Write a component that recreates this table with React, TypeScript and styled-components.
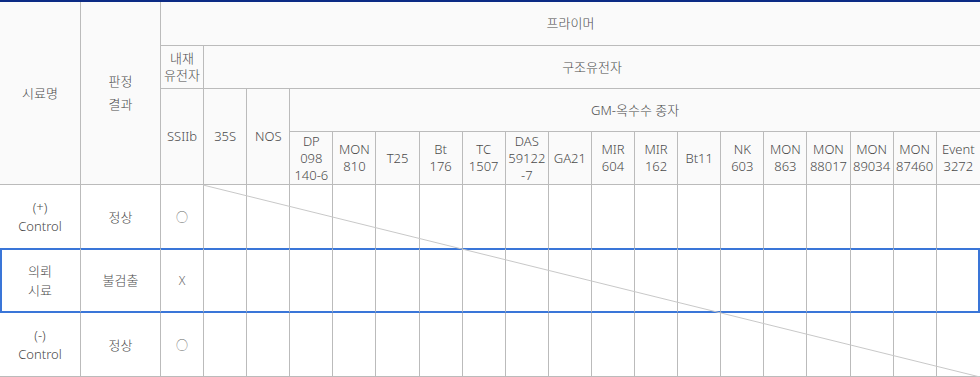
import styled, { createGlobalStyle } from "styled-components";

const GlobalStyle = createGlobalStyle`
  html, body {
    margin: 0;
    padding: 0;
    background: #fff;
  }
  body {
    font-family: "Noto Sans", "Noto Sans CJK KR", sans-serif;
  }
`;

const Wrap = styled.div`
  position: relative;
  width: 980px;
`;

const Table = styled.table`
  width: 980px;
  table-layout: fixed;
  border-collapse: separate;
  border-spacing: 0;
  border-top: 2px solid #0b2a84;
  color: #4a4a4a;
  font-size: 13px;
  font-weight: 300;
`;

const HeadRow = styled.tr<{ $h: number }>`
  height: ${({ $h }) => $h}px;
`;

const Th = styled.th<{ $last?: boolean; $lh?: number }>`
  box-sizing: border-box;
  padding: 0 1px;
  background: #fafafa;
  font-weight: 300;
  line-height: ${({ $lh }) => $lh ?? 17}px;
  text-align: center;
  vertical-align: middle;
  border-bottom: 1px solid #bbb;
  border-right: ${({ $last }) => ($last ? "none" : "1px solid #bbb")};
  white-space: nowrap;
`;

const BodyRow = styled.tr<{ $hl?: boolean; $beforeHl?: boolean }>`
  height: 64px;

  & > td {
    border-bottom: ${({ $hl, $beforeHl }) =>
      $hl ? "2px solid #3a76d8" : $beforeHl ? "1px solid #3a76d8" : "1px solid #bbb"};
    box-shadow: ${({ $hl }) => ($hl ? "inset 0 1px 0 #3a76d8" : "none")};
  }
  & > td:first-child {
    box-shadow: ${({ $hl }) =>
      $hl ? "inset 0 1px 0 #3a76d8, inset 2px 0 0 #3a76d8" : "none"};
  }
  & > td:last-child {
    border-right: none;
    box-shadow: ${({ $hl }) =>
      $hl ? "inset 0 1px 0 #3a76d8, inset -2px 0 0 #3a76d8" : "none"};
  }
`;

const Td = styled.td`
  box-sizing: border-box;
  padding: 1px 1px 0;
  background: #fff;
  line-height: 19px;
  text-align: center;
  vertical-align: middle;
  border-right: 1px solid #bbb;
`;

const Mark = styled.span`
  font-size: 12px;
  color: #666;
`;

const Diagonal = styled.svg`
  position: absolute;
  left: 203px;
  top: 185px;
  width: calc(100% - 203px);
  height: 192px;
  pointer-events: none;
`;

const gmColumns: string[][] = [
  ["DP", "098", "140-6"],
  ["MON", "810"],
  ["T25"],
  ["Bt", "176"],
  ["TC", "1507"],
  ["DAS", "59122", "-7"],
  ["GA21"],
  ["MIR", "604"],
  ["MIR", "162"],
  ["Bt11"],
  ["NK", "603"],
  ["MON", "863"],
  ["MON", "88017"],
  ["MON", "89034"],
  ["MON", "87460"],
  ["Event", "3272"],
];

const samples = [
  { name: ["(+)", "Control"], result: "정상", mark: "○", beforeHl: true },
  { name: ["의뢰", "시료"], result: "불검출", mark: "X", hl: true },
  { name: ["(-)", "Control"], result: "정상", mark: "○" },
];

const lines = (parts: string[]) =>
  parts.map((p, i) => (
    <span key={i}>
      {i > 0 && <br />}
      {p}
    </span>
  ));

export default function App() {
  return (
    <>
      <GlobalStyle />
      <Wrap>
        <Table>
          <colgroup>
            <col style={{ width: 81 }} />
            <col style={{ width: 80 }} />
            {Array.from({ length: 19 }).map((_, i) => (
              <col key={i} />
            ))}
          </colgroup>
          <thead>
            <HeadRow $h={44}>
              <Th rowSpan={4}>시료명</Th>
              <Th rowSpan={4} $lh={23}>
                판정
                <br />
                결과
              </Th>
              <Th colSpan={19} $last>
                프라이머
              </Th>
            </HeadRow>
            <HeadRow $h={43}>
              <Th>
                내재
                <br />
                유전자
              </Th>
              <Th colSpan={18} $last>
                구조유전자
              </Th>
            </HeadRow>
            <HeadRow $h={43}>
              <Th rowSpan={2}>SSIIb</Th>
              <Th rowSpan={2}>35S</Th>
              <Th rowSpan={2}>NOS</Th>
              <Th colSpan={16} $last>
                GM-옥수수 종자
              </Th>
            </HeadRow>
            <HeadRow $h={53}>
              {gmColumns.map((c, i) => (
                <Th key={i} $last={i === gmColumns.length - 1}>
                  {lines(c)}
                </Th>
              ))}
            </HeadRow>
          </thead>
          <tbody>
            {samples.map((s, r) => (
              <BodyRow key={r} $hl={s.hl} $beforeHl={s.beforeHl}>
                <Td>{lines(s.name)}</Td>
                <Td>{s.result}</Td>
                <Td>
                  <Mark>{s.mark}</Mark>
                </Td>
                {Array.from({ length: 18 }).map((_, i) => (
                  <Td key={i} />
                ))}
              </BodyRow>
            ))}
          </tbody>
        </Table>
        <Diagonal viewBox="0 0 100 100" preserveAspectRatio="none">
          <line
            x1="0"
            y1="0"
            x2="100"
            y2="100"
            stroke="#c8c8c8"
            strokeWidth="1"
            vectorEffect="non-scaling-stroke"
          />
        </Diagonal>
      </Wrap>
    </>
  );
}
